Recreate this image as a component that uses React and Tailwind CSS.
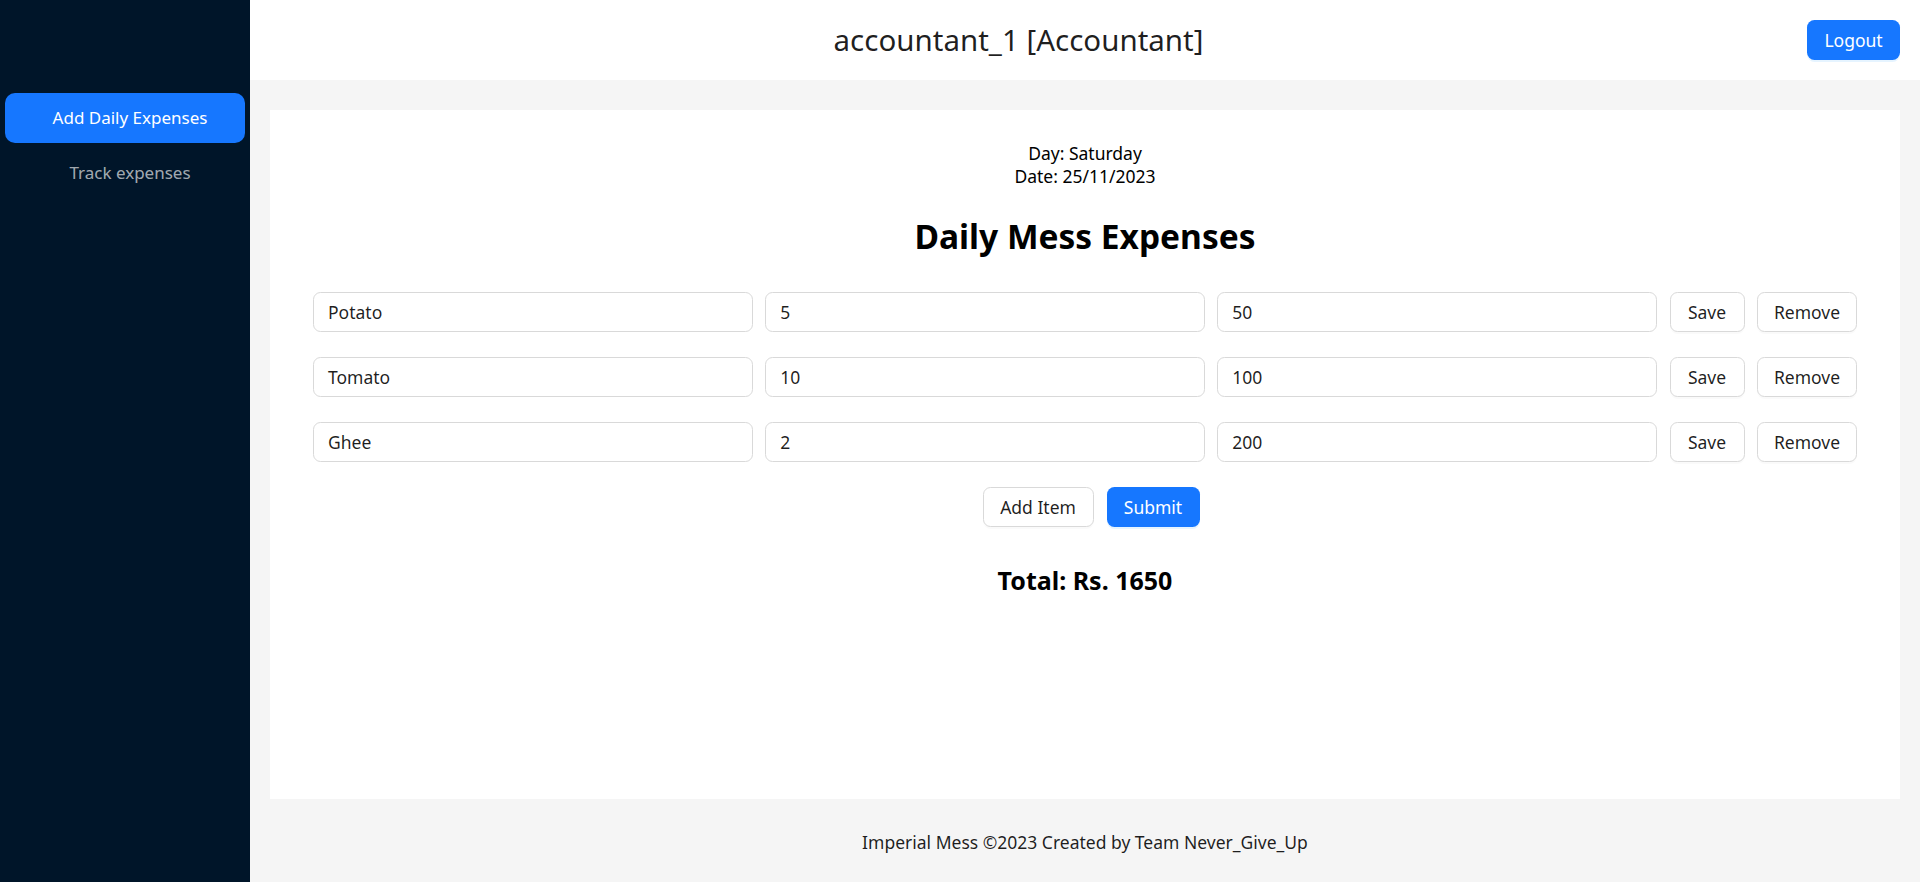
import React from "react";

const rows = [
  { name: "Potato", qty: "5", price: "50" },
  { name: "Tomato", qty: "10", price: "100" },
  { name: "Ghee", qty: "2", price: "200" },
];

function Field({ value }) {
  return (
    <div className="flex-1 h-[40px] border border-[#d9d9d9] rounded-[7.5px] bg-white flex items-center pl-[14px] text-[17.5px] text-[rgba(0,0,0,0.88)]">
      {value}
    </div>
  );
}

function Btn({ children, w }) {
  return (
    <button className={`h-[40px] ${w} border border-[#d9d9d9] rounded-[7.5px] bg-white text-[17.5px] text-[rgba(0,0,0,0.88)] shadow-[0_2px_0_rgba(0,0,0,0.02)]`}>
      {children}
    </button>
  );
}

export default function App() {
  return (
    <div
      className="flex w-full h-[882px] overflow-hidden"
      style={{ fontFamily: '"Noto Sans", "Open Sans", sans-serif' }}
    >
      <aside className="w-[250px] shrink-0 bg-[#001529] pt-[93px] px-[5px]">
        <div className="h-[50px] rounded-[10px] bg-[#1677ff] text-white text-[17px] flex items-center justify-center pl-[10px]">
          Add Daily Expenses
        </div>
        <div className="mt-[5px] h-[50px] rounded-[10px] text-[rgba(255,255,255,0.65)] text-[17px] flex items-center justify-center pl-[10px]">
          Track expenses
        </div>
      </aside>
      <div className="flex-1 flex flex-col bg-[#f5f5f5]">
        <header className="h-[80px] shrink-0 bg-white flex items-center pr-[20px]">
          <div className="flex-1 text-center text-[29.5px] text-[rgba(0,0,0,0.88)]">
            accountant_1 [Accountant]
          </div>
          <button className="ml-[20px] h-[40px] w-[93px] rounded-[7.5px] bg-[#1677ff] text-white text-[17.5px] shadow-[0_2px_0_rgba(5,145,255,0.1)]">
            Logout
          </button>
        </header>
        <main className="mt-[30px] mx-[20px] h-[689px] shrink-0 bg-white px-[43px] pt-[32px]">
          <div className="text-center text-[17.5px] leading-[23px] text-black">
            <div>Day: Saturday</div>
            <div>Date: 25/11/2023</div>
          </div>
          <h2 className="mt-[23px] text-center text-[33.5px] leading-[50px] font-bold text-black">
            Daily Mess Expenses
          </h2>
          <div className="mt-[31px] flex flex-col gap-[25px]">
            {rows.map((r) => (
              <div key={r.name} className="flex gap-[12.5px]">
                <Field value={r.name} />
                <Field value={r.qty} />
                <Field value={r.price} />
                <Btn w="w-[75px]">Save</Btn>
                <Btn w="w-[100px]">Remove</Btn>
              </div>
            ))}
          </div>
          <div className="mt-[25px] flex justify-center gap-[13px] pl-[12px]">
            <Btn w="w-[111px]">Add Item</Btn>
            <button className="h-[40px] w-[93px] rounded-[7.5px] bg-[#1677ff] text-white text-[17.5px] shadow-[0_2px_0_rgba(5,145,255,0.1)]">
              Submit
            </button>
          </div>
          <div className="mt-[36px] text-center text-[25px] leading-[35px] font-bold text-black">
            Total: Rs. 1650
          </div>
        </main>
        <footer className="flex-1 pt-[30px] text-center text-[17.5px] leading-[27px] text-[rgba(0,0,0,0.88)]">
          Imperial Mess ©2023 Created by Team Never_Give_Up
        </footer>
      </div>
    </div>
  );
}
